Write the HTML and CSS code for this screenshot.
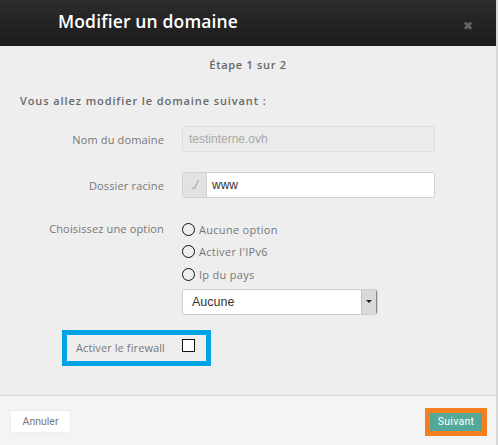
FILE: index.html
```html
<!DOCTYPE html>
<html lang="fr">
<head>
<meta charset="utf-8">
<title>Modifier un domaine</title>
<link rel="stylesheet" href="styles.css">
</head>
<body>
<div class="modal">
  <header class="head">
    <h1 class="title">Modifier un domaine</h1>
    <span class="close">&#10006;</span>
  </header>
  <main class="body">
    <p class="step">Étape 1 sur 2</p>
    <p class="intro">Vous allez modifier le domaine suivant :</p>
    <div class="row row-name">
      <label class="lbl">Nom du domaine</label>
      <div class="field disabled">testinterne.ovh</div>
    </div>
    <div class="row row-dir">
      <label class="lbl">Dossier racine</label>
      <div class="group">
        <span class="prefix">./</span>
        <span class="gfield">www</span>
      </div>
    </div>
    <div class="row row-opt">
      <label class="lbl lbl-top">Choisissez une option</label>
      <div class="opts">
        <div class="radio"><span class="dot"></span>Aucune option</div>
        <div class="radio"><span class="dot"></span>Activer l'IPv6</div>
        <div class="radio"><span class="dot"></span>Ip du pays</div>
        <div class="select"><span class="sel-text">Aucune</span><span class="sel-btn"><span class="arrow"></span></span></div>
      </div>
    </div>
    <div class="fw">
      <span class="fw-lbl">Activer le firewall</span>
      <span class="check"></span>
    </div>
  </main>
  <footer class="foot">
    <button class="btn-cancel">Annuler</button>
    <span class="next-wrap"><button class="btn-next">Suivant</button></span>
  </footer>
</div>
</body>
</html>
```
FILE: styles.css
```css
* { box-sizing: border-box; }
html, body { margin: 0; padding: 0; }
body {
  width: 498px;
  height: 445px;
  background: #d8d8d8;
  font-family: "Open Sans", "DejaVu Sans", sans-serif;
  overflow: hidden;
}
.modal {
  width: 496px;
  height: 445px;
  display: flex;
  flex-direction: column;
  background: #eeeeee;
}
.head {
  height: 46px;
  flex: none;
  background: linear-gradient(#2c2c2c, #1b1b1b);
  display: flex;
  align-items: center;
  justify-content: space-between;
  padding: 0 23px 0 58px;
}
.title {
  margin: 0 0 4px;
  color: #fff;
  font-size: 17.5px;
  font-weight: 600;
  letter-spacing: 0.15px;
}
.close {
  color: #666;
  font-size: 12px;
  font-weight: bold;
  margin-top: 6px;
  font-family: "DejaVu Sans", sans-serif;
}
.body {
  flex: 1;
  padding-top: 12px;
}
.step {
  margin: 0;
  text-align: center;
  color: #666;
  font-size: 11px;
  font-weight: 600;
  letter-spacing: 0.7px;
  line-height: 14px;
}
.intro {
  margin: 22px 0 0 20px;
  color: #696969;
  font-size: 11px;
  font-weight: 600;
  letter-spacing: 0.9px;
  line-height: 14px;
}
.row {
  display: grid;
  grid-template-columns: 164px auto;
  column-gap: 18px;
  align-items: center;
}
.row-name { margin-top: 18px; }
.row-dir { margin-top: 20px; }
.row-opt { margin-top: 24px; align-items: start; }
.lbl {
  text-align: right;
  color: #777;
  font-size: 11px;
  letter-spacing: 0.15px;
}
.lbl-top { line-height: 14px; margin-top: 0; }
.field {
  width: 253px;
  height: 26px;
  border: 1px solid #dcdcdc;
  border-radius: 3px;
  padding: 0 6px;
  line-height: 24px;
  font-family: "Liberation Sans", Arial, sans-serif;
  font-size: 12px;
}
.disabled { background: #ebebeb; color: #a8a8a8; }
.group {
  width: 253px;
  height: 26px;
  display: flex;
  border: 1px solid #d0d0d0;
  border-radius: 3px;
  overflow: hidden;
}
.prefix {
  width: 24px;
  background: #e2e2e2;
  border-right: 1px solid #d4d4d4;
  color: #999;
  font-family: "Liberation Sans", Arial, sans-serif;
  font-size: 12px;
  line-height: 24px;
  text-align: center;
  font-style: italic;
}
.gfield {
  flex: 1;
  background: #fff;
  padding-left: 5px;
  color: #333;
  font-family: "Liberation Sans", Arial, sans-serif;
  font-size: 12px;
  line-height: 24px;
}
.opts { display: flex; flex-direction: column; }
.radio {
  display: flex;
  align-items: center;
  height: 14px;
  margin-bottom: 8.5px;
  color: #777;
  font-size: 11px;
  letter-spacing: 0.3px;
}
.dot {
  width: 13px;
  height: 13px;
  border: 1.3px solid #111;
  border-radius: 50%;
  margin-right: 4px;
  background: transparent;
}
.select {
  width: 196px;
  height: 26px;
  margin-top: -1px;
  display: flex;
  border: 1px solid #d0d0d0;
  border-radius: 3px;
  background: #fff;
  overflow: hidden;
}
.sel-text {
  flex: 1;
  padding-left: 9px;
  line-height: 24px;
  color: #333;
  font-family: "Liberation Sans", Arial, sans-serif;
  font-size: 12.5px;
}
.sel-btn {
  width: 16px;
  background: #d9d9d9;
  border-left: 1px solid #c4c4c4;
  border-right: 1px solid #888;
  display: flex;
  align-items: center;
  justify-content: center;
}
.arrow {
  width: 0;
  height: 0;
  border-left: 3px solid transparent;
  border-right: 3px solid transparent;
  border-top: 3px solid #222;
}
.fw {
  margin: 15px 0 0 62px;
  width: 149px;
  height: 36px;
  border: 5px solid #00a3e3;
  display: flex;
  align-items: center;
  padding-left: 9px;
}
.fw-lbl {
  color: #777;
  font-size: 11px;
  letter-spacing: 0.1px;
  width: 106px;
}
.check {
  width: 13px;
  height: 13px;
  border: 1.3px solid #111;
  background: #fff;
  margin-top: -4px;
}
.foot {
  height: 50px;
  flex: none;
  background: #f4f4f4;
  border-top: 1px solid #d9d9d9;
  display: flex;
  align-items: center;
  justify-content: space-between;
  padding: 0 9px 0 11px;
}
.btn-cancel {
  width: 59px;
  height: 21px;
  border: none;
  background: #fff;
  box-shadow: 0 0 1px rgba(0,0,0,0.15);
  color: #777;
  font-family: "Roboto", "Liberation Sans", sans-serif;
  font-size: 10.5px;
  padding: 0;
  margin-top: 2px;
}
.next-wrap {
  display: block;
  border: 5px solid #f47f20;
  margin-top: 2px;
}
.btn-next {
  display: block;
  width: 52px;
  height: 18px;
  border: none;
  background: #53a898;
  color: #fff;
  font-family: "Roboto", "Liberation Sans", sans-serif;
  font-size: 10.5px;
  letter-spacing: 0.3px;
  padding: 0;
}
```
